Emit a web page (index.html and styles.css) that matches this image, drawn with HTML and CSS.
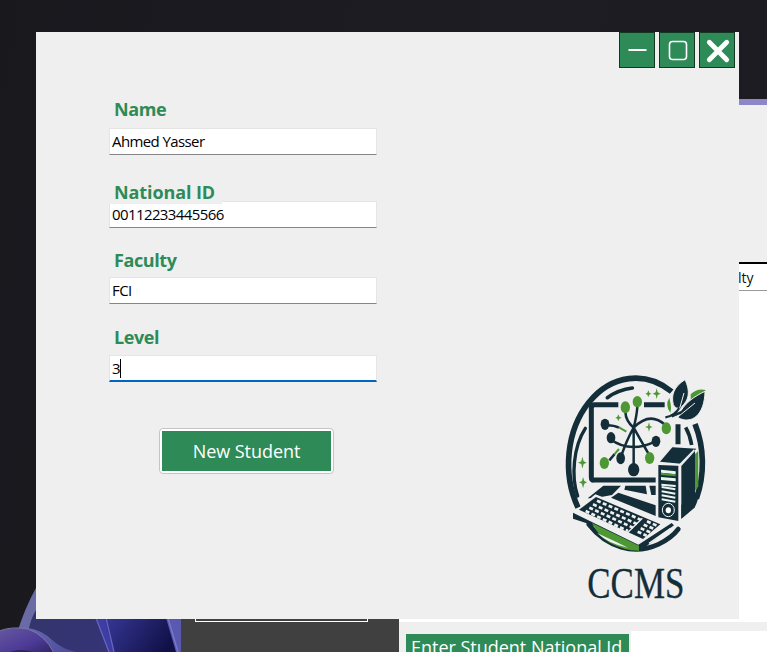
FILE: index.html
```html
<!DOCTYPE html>
<html lang="en">
<head>
<meta charset="utf-8">
<title>New Student</title>
<link rel="stylesheet" href="styles.css">
</head>
<body>
<main class="desktop">
  <svg class="wallpaper" viewBox="0 0 181 72" aria-hidden="true">
    <defs>
      <linearGradient id="base" x1="0" x2="1" y1="0" y2="0.4"><stop offset="0" stop-color="#35346a"/><stop offset="1" stop-color="#34347a"/></linearGradient>
      <linearGradient id="fold" x1="0" x2="1" y1="0" y2="0.3"><stop offset="0" stop-color="#3b3ba0"/><stop offset="0.5" stop-color="#262674"/><stop offset="1" stop-color="#111148"/></linearGradient>
      <linearGradient id="petal" x1="0" x2="1" y1="0" y2="1"><stop offset="0" stop-color="#66589e"/><stop offset="0.6" stop-color="#4c3a96"/><stop offset="1" stop-color="#30245f"/></linearGradient>
      <linearGradient id="rim" x1="0" x2="1" y1="0" y2="1"><stop offset="0" stop-color="#6767ae"/><stop offset="1" stop-color="#4b4b9c"/></linearGradient>
    </defs>
    <path fill="url(#base)" d="M36 8Q25 28 18 54L18 72H181V8Z"/>
    <path fill="#6a6aa4" d="M36 8Q25 28 18 50L28 52Q31 38 36 30Z"/>
    <path fill="url(#fold)" d="M96 38H181V72H110Z"/>
    <path fill="#3d3da6" d="M96 38H104L114 72H109Z"/>
    <path fill="none" stroke="#6565bd" stroke-width="1.3" d="M96 38L109 72M106 38L114 72"/>
    <path fill="#5959b0" d="M166 38H181V72H176Z"/>
    <path fill="none" stroke="#7777cb" stroke-width="1.4" d="M168 38L178 72"/>
    <path fill="url(#rim)" d="M28 48Q42 50 52 60Q62 69 76 72H48Z"/>
    <path fill="url(#petal)" stroke="#7777ad" stroke-width="1" d="M-1 51Q12 46 28 49Q45 55 54 73H-1Z"/>
    <path fill="#30245c" d="M10 72Q20 68 33 72Z"/>
  </svg>

  <section class="backdrop-app">
    <div class="app-header"></div>
    <div class="grid-head">lty</div>
    <div class="grid-body"></div>
  </section>
  <aside class="sidebar"><div class="sidebar-button"></div></aside>
  <section class="search-bar">
    <div class="search-label"><span>Enter Student National Id</span></div>
    <div class="search-input"></div>
  </section>

  <section class="dialog">
    <header class="titlebar">
      <button class="window-button" aria-label="Minimize"><svg viewBox="0 0 34 34"><path d="M8.5 17H26.5" stroke="#fff" stroke-width="2"/></svg></button>
      <button class="window-button" aria-label="Maximize"><svg viewBox="0 0 34 34"><rect x="9.5" y="8.5" width="17" height="18" rx="3" fill="none" stroke="#fff" stroke-width="1.6"/></svg></button>
      <button class="window-button" aria-label="Close"><svg viewBox="0 0 34 34"><path d="M9.3 9.2L26.7 26.8M26.7 9.2L9.3 26.8" stroke="#fff" stroke-width="4.8" stroke-linecap="round"/></svg></button>
    </header>
    <form class="form">
      <div class="field name"><label>Name</label><div class="input"><span>Ahmed Yasser</span></div></div>
      <div class="field national"><label>National ID</label><div class="input"><span>00112233445566</span></div></div>
      <div class="field faculty"><label>Faculty</label><div class="input"><span>FCI</span></div></div>
      <div class="field level"><label>Level</label><div class="input focused"><span>3</span><i class="caret"></i></div></div>
      <button type="button" class="submit"><span>New Student</span></button>
    </form>
    <svg class="logo" viewBox="0 0 480 735" role="img" aria-label="CCMS">
      <g fill="none" stroke="#142e39" stroke-width="17">
        <path d="M69 428A201 257 0 0 1 350 80"/>
        <path d="M420 177A201 257 0 0 1 424 401"/>
        <path d="M157 98Q190 74 232 69" stroke-width="11" stroke-linecap="round"/>
        <path d="M91 190C55 245 48 335 68 393" stroke-width="10" stroke-linecap="round"/>
        <path d="M392 187Q405 210 410 240" stroke-width="11"/>
        <path d="M116 346Q109 346 109 336V129Q109 119 119 119H190M267 119H329M369 178V238M116 345H302" stroke-width="15"/>
        <path d="M101 478A201 257 0 0 0 310 538Q350 519 370 492" stroke-width="14" stroke-linecap="round"/>
      </g>

      <path fill="#f4fbf7" d="M236 190L216 237Q240 248 263 240Z"/>
      <g fill="none" stroke="#142e39" stroke-width="7.5">
        <path d="M211 140Q212 168 236 188Q245 153 247 126M236 188V310M236 188Q215 225 198 275M236 188Q265 240 284 272M236 188Q285 138 331 180M165 222Q225 266 300 230M150 181Q176 180 192 188M163 286L179 267"/>
      </g>
      <path fill="none" stroke="#4d9834" stroke-width="6" d="M192 187L214 200M178 268L192 252"/>
      <g fill="#142e39"><ellipse cx="150" cy="178" rx="13" ry="17"/><ellipse cx="168" cy="218" rx="13" ry="17"/><ellipse cx="303" cy="229" rx="13" ry="17"/><ellipse cx="197" cy="280" rx="13" ry="18"/><ellipse cx="236" cy="314" rx="17" ry="20"/></g>
      <g fill="#4d9834">
        <ellipse cx="211" cy="127" rx="14" ry="18"/><ellipse cx="247" cy="110" rx="14" ry="17"/><ellipse cx="334" cy="190" rx="14" ry="18"/><ellipse cx="284" cy="279" rx="14" ry="18"/><ellipse cx="148" cy="294" rx="14" ry="18"/>
        <path d="M280 76L283 83L289 86L283 89L280 96L277 89L271 86L277 83Z"/>
        <path d="M305 70L308 82L317 86L308 90L305 102L302 90L293 86L302 82Z"/>
        <path d="M190 148L193 155L200 158L193 161L190 169L187 161L181 158L187 155Z"/>
        <path d="M282 172L285 183L293 186L285 189L282 200L279 189L270 186L279 183Z"/>
        <path d="M82 275L86 289L95 293L86 297L82 311L79 297L69 293L79 289Z"/>
        <path d="M84 336L88 348L96 352L88 356L84 370L81 356L72 352L81 348Z"/>
        <path d="M343 98Q329 121 346 143Q350 129 347 117ZM407 88Q426 69 452 75L446 85Q427 91 407 109Z"/>
      </g>
      <g fill="#142e39" stroke="#efefef" stroke-width="3">
        <path d="M390 44C356 65 348 91 355 119Q362 134 376 128C405 105 405 76 390 44Z"/>
        <path d="M450 79C425 91 382 114 369 158C410 180 449 150 450 79Z"/>
      </g>
      <path d="M331 157Q358 154 375 126L382 104M350 154L376 143L390 134" fill="none" stroke="#142e39" stroke-width="7"/>
      <path d="M374 130L387 84M372 153L420 114" fill="none" stroke="#efefef" stroke-width="3"/>

      <path fill="#142e39" d="M145 362H198L171 390L118 400H98ZM211 362H272L276 388L208 374ZM190 383L302 421V453L168 398ZM283 362H302V390H289Z"/>
      <path fill="#142e39" d="M310 300L370 302V468L310 457ZM315 290L352 247L424 251L377 296ZM379 303L420 258V427L379 461Z"/>
      <path fill="#142e39" d="M379 461V420L432 378Q431 405 420 425Z"/>
      <path fill="#4d9834" d="M420 267L430 258V364L420 378Z"/>
      <path fill="none" stroke="#efefef" stroke-width="4" d="M305 297L374 299V470M374 299L418 254"/>
      <path fill="#eaf7f0" d="M318 314L362 319V328L318 323ZM318 336L362 340V349L318 345ZM319 356L362 360V366L319 362Z"/>
      <path fill="#4d9834" d="M318 323L362 328V334L318 330Z"/>
      <g stroke="#eef5f1" stroke-width="6"><path d="M320 366L361 373M320 379L361 386M320 391L361 398M320 403L361 410"/></g>
      <ellipse cx="340" cy="435" rx="18" ry="20" fill="none" stroke="#efefef" stroke-width="3"/><ellipse cx="340" cy="436" rx="8" ry="9" fill="#fff"/>

      <path fill="#efefef" d="M121 388L330 470L260 540L54 443Z"/>
      <path fill="#142e39" d="M54 443L250 539L350 474L357 481L258 556L104 478L54 461Z"/>
      <path fill="#efefef" d="M72 439L258 530L331 476L322 470L121 389Z"/>
      <path fill="#142e39" d="M123 396L316 478L264 522L72 434Z"/>
      <path fill="#4d9834" d="M111 474L252 542V557Q211 558 164 533Q130 514 111 474Z"/>
      <path fill="#efefef" d="M126 504Q163 538 219 548L184 531Z"/>
      <g fill="none" stroke="#efefef" stroke-width="8" stroke-dasharray="12 7">
        <path d="M126 407L257 464M114 418L246 477M103 428L234 488M92 438L219 498"/>
        <path d="M276 469L306 482M266 479L298 492M257 490L288 503M248 500L275 512"/>
      </g>
      <path stroke="#efefef" stroke-width="4" d="M262 460L216 505"/>
      <path stroke="#efefef" stroke-width="4" fill="none" d="M282 535L347 490"/>
      <text x="97" y="698" class="logo-name" textLength="291" lengthAdjust="spacingAndGlyphs">CCMS</text>
    </svg>
  </section>
</main>
</body>
</html>
```
FILE: styles.css
```css
* { box-sizing: border-box; }
body { margin: 0; overflow: hidden; font-family: "Open Sans", "Noto Sans", sans-serif; }
button { font: inherit; padding: 0; }
.desktop { position: relative; width: 767px; height: 652px; overflow: hidden; background: linear-gradient(100deg, #18181d, #1e1d24 60%, #1c1b22); }
.wallpaper { position: absolute; left: 0; top: 580px; width: 181px; height: 72px; }

.backdrop-app { position: absolute; left: 399px; top: 99px; width: 368px; height: 523px; display: flex; flex-direction: column; border-top: 6px solid #8d87c7; background: #fff; }
.app-header { height: 157px; background: #efefef; }
.grid-head { height: 29px; padding-left: 339px; border-top: 2px solid #000; border-bottom: 1px solid #999; font-size: 14px; line-height: 28px; color: #111; background: #fff; }
.grid-body { flex: 1; background: #fff; }
.sidebar { position: absolute; left: 181px; top: 600px; width: 218px; height: 52px; padding-left: 14px; background: #404040; }
.sidebar-button { width: 173px; height: 22px; border: 1px solid #fff; }
.search-bar { position: absolute; left: 399px; top: 622px; width: 368px; height: 30px; display: flex; align-items: flex-start; padding-left: 7px; background: #efefef; }
.search-label { width: 223px; height: 30px; margin-top: 12px; padding-left: 5px; background: #2e8b57; color: #fff; font-size: 18px; line-height: 26px; white-space: nowrap; }
.search-label span { letter-spacing: -0.02px; }
.search-input { flex: 1; height: 30px; margin: 9px 0 0 2px; background: #fff; }

.dialog { position: absolute; left: 36px; top: 32px; width: 703px; height: 587px; background: #efefef; }
.titlebar { display: flex; justify-content: flex-end; gap: 4px; height: 36px; padding-right: 4px; }
.window-button { width: 36px; height: 36px; border: 1px solid #123722; background: #2e8b57; }
.window-button svg { display: block; width: 34px; height: 34px; }
.form { width: 268px; margin-left: 73px; }
.field { display: flex; flex-direction: column; }
.name { padding-top: 29px; }
.national { padding-top: 25px; }
.faculty { padding-top: 20px; }
.level { padding-top: 21px; }
.field label { height: 25px; padding-left: 5px; color: #2e8b57; font-size: 18px; line-height: 25px; font-weight: 700; letter-spacing: -0.4px; }
.input { display: flex; align-items: center; width: 268px; height: 27px; margin-top: 6px; padding-left: 2px; border: 1px solid #e5e5e5; border-bottom-color: #858585; background: #fff; color: #000; font-size: 15px; line-height: 23px; }
.field.national label { position: relative; width: 113px; height: 24px; background: #efefef; letter-spacing: -0.1px; }
.national .input { margin-top: -3px; }
.faculty .input { margin-top: 4px; }
.level .input { margin-top: 5px; }
.input span { letter-spacing: -0.6px; }
.input.focused { border-bottom: 2px solid #0067c0; }
.caret { width: 1px; height: 19px; background: #000; }
.submit { display: block; width: 175px; height: 46px; margin: 46px 0 0 50px; border: 1px solid #c5c5c5; border-radius: 4px; padding: 2px; background: #fff; color: #fff; font-size: 18px; letter-spacing: -0.05px; }
.submit span { display: block; height: 40px; line-height: 40px; background: #2e8b57; }
.logo { position: absolute; left: 519px; top: 333px; width: 160px; height: 245px; }
.logo-name { font: 132px "Liberation Serif", serif; fill: #142e39; stroke: #142e39; stroke-width: 1; }
```
